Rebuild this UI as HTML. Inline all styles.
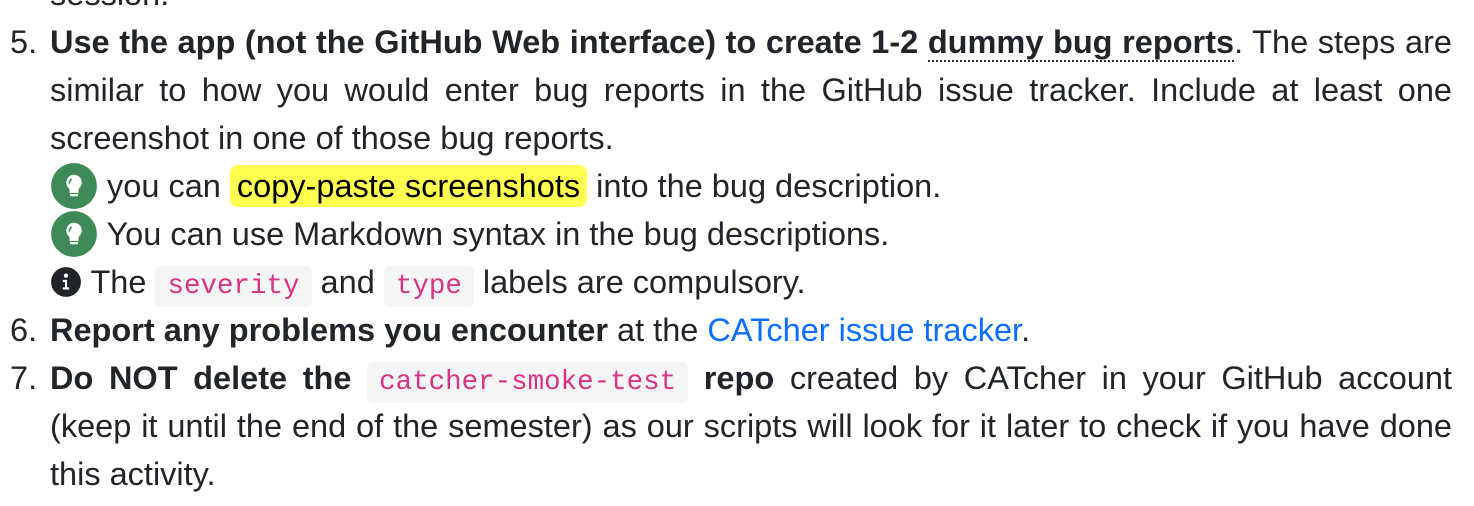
<!DOCTYPE html>
<html><head><meta charset="utf-8"><style>
html,body{margin:0;padding:0;background:#fff;width:1474px;height:506px;overflow:hidden}
body{font-family:"Liberation Sans",sans-serif;font-size:32.5px;color:#212529;position:relative}
.l{position:absolute;left:50px;width:1402px;height:48px;line-height:48px;white-space:nowrap}
.j{text-align:justify;text-align-last:justify;white-space:normal}
.n{position:absolute;left:10px;height:48px;line-height:48px}
b{font-weight:bold}
.dot{border-bottom:2px dotted #333}
code{font-family:"Liberation Mono",monospace;font-size:27.5px;color:#d63384;background:#f5f5f5;border-radius:6px;padding:5px 12px}
.hl{background:#ffff52;border-radius:8px;padding:3px 7px;color:#000}
a{color:#0d6efd;text-decoration:none}
.ic{display:inline-block;vertical-align:middle;position:relative;top:-2px}
</style></head><body>
<div class="l" style="top:-30px">session.</div>
<div class="n" style="top:18px">5.</div>
<div class="l j" style="top:18px"><b>Use the app (not the GitHub Web interface) to create 1-2 <span class="dot">dummy bug reports</span></b>. The steps are</div>
<div class="l j" style="top:66px">similar to how you would enter bug reports in the GitHub issue tracker. Include at least one</div>
<div class="l" style="top:114px">screenshot in one of those bug reports.</div>
<div class="l" style="top:162px"><svg class="ic" width="48" height="48" viewBox="0 0 42 42"><circle cx="21" cy="21" r="20" fill="#3d8a58"/><path d="M21 11a7 7 0 0 0-4 12.6V27h8v-3.4A7 7 0 0 0 21 11z" fill="#fff"/><rect x="17.5" y="28" width="7" height="2" fill="#fff"/><path d="M19 15q-2 1-2 4" stroke="#3d8a58" stroke-width="1.4" fill="none"/></svg> you can <span class="hl">copy-paste screenshots</span> into the bug description.</div>
<div class="l" style="top:210px"><svg class="ic" width="48" height="48" viewBox="0 0 42 42"><circle cx="21" cy="21" r="20" fill="#3d8a58"/><path d="M21 11a7 7 0 0 0-4 12.6V27h8v-3.4A7 7 0 0 0 21 11z" fill="#fff"/><rect x="17.5" y="28" width="7" height="2" fill="#fff"/><path d="M19 15q-2 1-2 4" stroke="#3d8a58" stroke-width="1.4" fill="none"/></svg> You can use Markdown syntax in the bug descriptions.</div>
<div class="l" style="top:258px"><svg class="ic" width="32" height="32" viewBox="0 0 30 30"><circle cx="15" cy="15" r="14" fill="#212529"/><circle cx="15" cy="9" r="2" fill="#fff"/><path d="M12 13h4v7h2v2h-6v-2h2v-5h-2z" fill="#fff"/></svg> The <code>severity</code> and <code>type</code> labels are compulsory.</div>
<div class="n" style="top:306px">6.</div>
<div class="l" style="top:306px"><b>Report any problems you encounter</b> at the <a>CATcher issue tracker</a>.</div>
<div class="n" style="top:354px">7.</div>
<div class="l j" style="top:354px"><b>Do NOT delete the</b> <code>catcher-smoke-test</code> <b>repo</b> created by CATcher in your GitHub account</div>
<div class="l j" style="top:402px">(keep it until the end of the semester) as our scripts will look for it later to check if you have done</div>
<div class="l" style="top:450px">this activity.</div>
</body></html>
